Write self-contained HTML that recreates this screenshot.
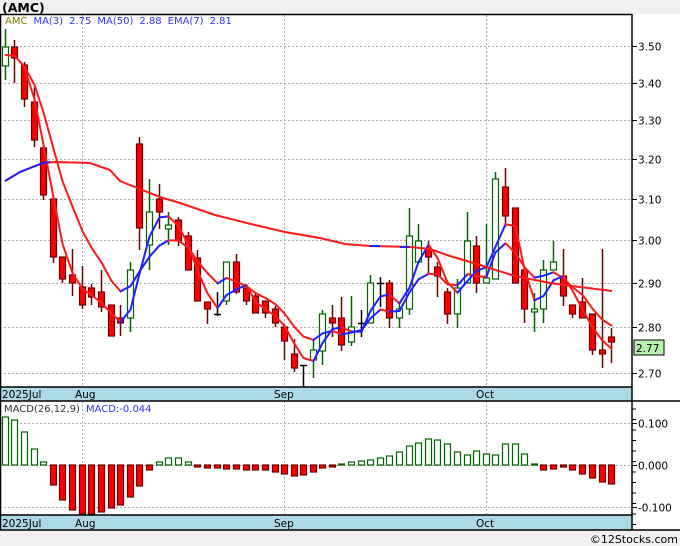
<!DOCTYPE html>
<html><head><meta charset="utf-8"><style>
body{margin:0;width:680px;height:546px;overflow:hidden;background:#fff;font-family:"DejaVu Sans",sans-serif}
svg{position:absolute;left:0;top:0}
</style></head><body>
<svg id="s" width="680" height="546" xmlns="http://www.w3.org/2000/svg" font-family="DejaVu Sans, Liberation Sans, sans-serif">
<rect x="0" y="0" width="680" height="14" fill="#f0f0f0"/>
<text x="2" y="12" font-size="12.5" font-weight="bold" fill="#000">(AMC)</text>
<rect x="0" y="530" width="680" height="16" fill="#f0f0f0"/>
<text x="678" y="543" font-size="11" fill="#000" text-anchor="end">©12Stocks.com</text>
<rect x="0" y="387" width="632" height="14" fill="#add8e6"/>
<rect x="0" y="515" width="632" height="15" fill="#add8e6"/>
<g id="grid" stroke="#aaa" stroke-dasharray="2,2" stroke-width="1"></g>
<g id="candles"></g>
<g id="lines" fill="none" stroke-width="2"></g>
<g id="macd"></g>
<g stroke="#000" stroke-width="1.5" fill="none">
<line x1="0.5" y1="14.5" x2="632" y2="14.5"/>
<line x1="0.5" y1="14" x2="0.5" y2="530"/>
<line x1="632" y1="14" x2="632" y2="530"/>
<line x1="0" y1="387" x2="632" y2="387"/>
<line x1="0" y1="401" x2="680" y2="401"/>
<line x1="0" y1="515" x2="632" y2="515"/>
<line x1="0" y1="530" x2="680" y2="530"/>
</g>
<g font-size="10.5" fill="#000">
<text x="2" y="398">2025Jul</text><text x="75" y="398">Aug</text><text x="274" y="398">Sep</text><text x="476" y="398">Oct</text>
<text x="2" y="527">2025Jul</text><text x="75" y="527">Aug</text><text x="274" y="527">Sep</text><text x="476" y="527">Oct</text>
</g>
<text x="5" y="24" font-size="10"><tspan fill="#808000">AMC</tspan><tspan fill="#3333ff" dx="6">MA(3)</tspan><tspan fill="#3333ff" dx="6">2.75</tspan><tspan fill="#3333ff" dx="6">MA(50)</tspan><tspan fill="#3333ff" dx="6">2.88</tspan><tspan fill="#3333ff" dx="6">EMA(7)</tspan><tspan fill="#3333ff" dx="6">2.81</tspan></text>
<text x="4" y="412" font-size="10"><tspan fill="#333">MACD(26,12,9)</tspan><tspan fill="#3333ff" dx="6">MACD:-0.044</tspan></text>
<g id="axis" font-size="10.5" fill="#000"></g>
<rect x="634" y="340" width="30" height="15" fill="#b8f0b0" stroke="#000"/>
<text x="636" y="352" font-size="10.5" fill="#000">2.77</text>
</svg>
<script>
var NS="http://www.w3.org/2000/svg";
function el(p,t,a){var e=document.createElementNS(NS,t);for(var k in a)e.setAttribute(k,a[k]);p.appendChild(e);return e;}
var g=document.getElementById('grid'),ax=document.getElementById('axis');
function py(p){return 46+1260*(Math.log(3.5)-Math.log(p));}
[3.5,3.4,3.3,3.2,3.1,3.0,2.9,2.8,2.7].forEach(function(p){var y=Math.round(py(p))+0.5;
el(g,'line',{x1:0,y1:y,x2:632,y2:y});el(ax,'line',{x1:632,y1:y,x2:637,y2:y,stroke:'#000'});
var t=el(ax,'text',{x:638,y:y+4});t.textContent=p.toFixed(2);});
[[0.1,'0.100',423],[0,'0.000',465],[-0.1,'-0.100',507]].forEach(function(a){var y=a[2]+0.5;
el(g,'line',{x1:0,y1:y,x2:632,y2:y});el(ax,'line',{x1:632,y1:y,x2:637,y2:y,stroke:'#000'});
var t=el(ax,'text',{x:638,y:y+4});t.textContent=a[1];});
for(var y=409;y<530;y+=10.5){if(Math.abs(y-423)>3&&Math.abs(y-465)>3&&Math.abs(y-507)>3)el(ax,'line',{x1:632,y1:y,x2:636,y2:y,stroke:'#000'});}
[82,284,486].forEach(function(x){el(g,'line',{x1:x+0.5,y1:15,x2:x+0.5,y2:387});el(g,'line',{x1:x+0.5,y1:401,x2:x+0.5,y2:515});});
var C=[[5,47,66,29,80,'g'],[14,47,58,40,83,'r'],[24,65,99,62,107,'r'],[34,102,140,87,147,'r'],[43,148,195,146,200,'r'],
[53,199,257,199,263,'r'],[62,257,279,257,283,'r'],[72,275,283,249,296,'r'],[82,287,305,266,309,'r'],[91,288,297,284,305,'r'],
[101,292,307,270,312,'r'],[111,305,336,305,336,'r'],[120,318,323,305,336,'r'],[130,270,318,262,332,'g'],[139,144,228,137,250,'r'],
[149,212,245,179,270,'g'],[159,199,212,184,229,'r'],[168,225,229,212,245,'g'],[178,220,241,217,246,'r'],[188,236,270,232,270,'r'],
[197,258,301,250,301,'r'],[207,302,309,302,324,'r'],[217,314,314,292,316,'k'],[226,262,301,262,305,'g'],[236,262,292,254,294,'r'],
[246,288,301,284,305,'r'],[255,296,313,294,313,'r'],[265,301,313,301,318,'r'],[275,309,323,306,327,'r'],[284,327,341,327,360,'r'],
[294,354,368,339,372,'r'],[303,365,365,365,387,'k'],[313,350,360,340,378,'g'],[322,314,351,310,365,'g'],[332,318,323,305,337,'r'],
[341,318,345,297,351,'r'],[351,327,342,296,346,'g'],[361,323,323,310,337,'k'],[370,283,323,275,323,'g'],[380,283,283,277,307,'k'],
[389,283,318,280,328,'r'],[399,309,318,303,328,'g'],[409,236,309,208,315,'g'],[418,241,262,224,262,'g'],[428,249,257,241,273,'r'],
[437,267,276,262,297,'r'],[447,292,314,288,324,'r'],[457,288,314,279,328,'g'],[467,241,283,212,283,'g'],[476,246,283,236,293,'r'],
[486,278,283,224,283,'g'],[495,179,279,172,279,'g'],[505,187,216,168,227,'r'],[515,208,283,208,283,'r'],[524,270,309,270,323,'r'],
[534,309,312,293,332,'g'],[543,270,309,260,323,'g'],[553,262,270,241,270,'g'],[563,276,296,249,306,'r'],[572,305,314,305,318,'r'],
[582,302,318,278,318,'r'],[592,314,350,314,355,'r'],[602,350,354,249,368,'r'],[611,337,342,328,363,'r']];
var cg=document.getElementById('candles');
C.forEach(function(c){var x=c[0],col=c[5]=='g'?'#006400':c[5]=='r'?'#6b0000':'#000';
el(cg,'line',{x1:x+0.5,y1:c[3],x2:x+0.5,y2:c[4],stroke:col,'stroke-width':1.5});
if(c[5]=='k'){el(cg,'line',{x1:x-3,y1:c[1]+0.5,x2:x+4,y2:c[1]+0.5,stroke:'#000','stroke-width':1.5});}
else el(cg,'rect',{x:x-2.5,y:c[1],width:6,height:Math.max(c[2]-c[1],2),fill:c[5]=='g'?'#fff':'#f00',stroke:col,'stroke-width':1.2});});
var cl=C.map(function(c){return c[5]=='r'?c[2]:c[1];});
var lg=document.getElementById('lines');
function drawSeg(xs,ys){for(var i=1;i<ys.length;i++){if(ys[i]==null||ys[i-1]==null)continue;
el(lg,'line',{x1:xs[i-1],y1:ys[i-1],x2:xs[i],y2:ys[i],stroke:ys[i]<=ys[i-1]?'#1f1fff':'#ff1a1a','stroke-linecap':'round'});}}
var xs=C.map(function(c){return c[0]+0.5;});
var ma=cl.map(function(v,i){return i<2?null:(cl[i]+cl[i-1]+cl[i-2])/3;});
var em=[],e=90;cl.forEach(function(v,i){e=i==0?55:e+(v-e)*0.25;em.push(e);});
drawSeg(xs,em);drawSeg(xs,ma);
el(lg,'polyline',{points:'5,181 20,172 43,163 55,162 90,163 110,170 120,181 135,187 160,197 180,203 215,215 255,225 285,232 320,238 345,244 370,246 410,247 430,249 450,256 480,265 515,276 550,283 580,287 612,291',stroke:'#ff1a1a'});
el(lg,'polyline',{points:'5,181 20,172 43,163 50,162',stroke:'#1f1fff'});
el(lg,'polyline',{points:'370,246 380,246',stroke:'#1f1fff'});
el(lg,'polyline',{points:'400,247 409,247',stroke:'#1f1fff'});
var M=[417,420,432,449,462,485,500,510,514,514,512,508,505,497,486,470,462,458,458,462,467,468,468,469,469,470,470,470,472,474,476,475,472,468,466,464,462,461,460,458,456,452,446,443,439,440,444,452,455,451,454,455,444,444,454,464,470,469,467,470,474,478,482,484,483];
var mg=document.getElementById('macd');
C.forEach(function(c,i){var t=M[i];if(t==null)return;var x=c[0]-2.5;
if(t<465)el(mg,'rect',{x:x,y:t,width:6,height:465-t,fill:'#fff',stroke:'#006400','stroke-width':1.2});
else el(mg,'rect',{x:x,y:465,width:6,height:Math.max(t-465,2),fill:'#f00',stroke:'#6b0000','stroke-width':1.2});});
</script>
</body></html>
